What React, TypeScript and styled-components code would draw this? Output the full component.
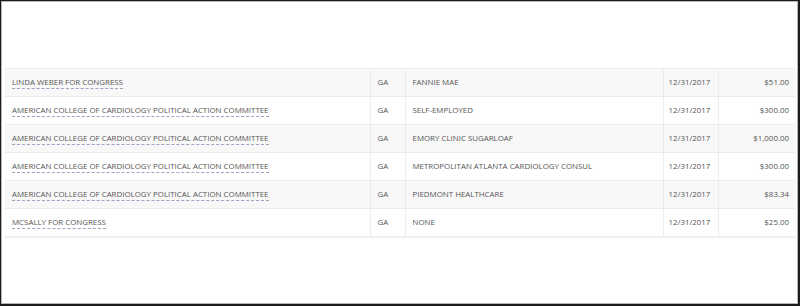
import * as React from "react";
import styled, { createGlobalStyle } from "styled-components";

interface Contribution {
    committee: string;
    state: string;
    employer: string;
    date: string;
    amount: string;
}

const rows: Contribution[] = [
    { committee: "LINDA WEBER FOR CONGRESS", state: "GA", employer: "FANNIE MAE", date: "12/31/2017", amount: "$51.00" },
    { committee: "AMERICAN COLLEGE OF CARDIOLOGY POLITICAL ACTION COMMITTEE", state: "GA", employer: "SELF-EMPLOYED", date: "12/31/2017", amount: "$300.00" },
    { committee: "AMERICAN COLLEGE OF CARDIOLOGY POLITICAL ACTION COMMITTEE", state: "GA", employer: "EMORY CLINIC SUGARLOAF", date: "12/31/2017", amount: "$1,000.00" },
    { committee: "AMERICAN COLLEGE OF CARDIOLOGY POLITICAL ACTION COMMITTEE", state: "GA", employer: "METROPOLITAN ATLANTA CARDIOLOGY CONSUL", date: "12/31/2017", amount: "$300.00" },
    { committee: "AMERICAN COLLEGE OF CARDIOLOGY POLITICAL ACTION COMMITTEE", state: "GA", employer: "PIEDMONT HEALTHCARE", date: "12/31/2017", amount: "$83.34" },
    { committee: "MCSALLY FOR CONGRESS", state: "GA", employer: "NONE", date: "12/31/2017", amount: "$25.00" },
];

const GlobalStyle = createGlobalStyle`
    html, body {
        margin: 0;
        padding: 0;
        background: #fff;
    }
`;

export default function App() {
    return (
        <>
            <GlobalStyle />
            <Frame>
                <Table>
                    <colgroup>
                        <Col $w={365} />
                        <Col $w={35} />
                        <Col $w={258} />
                        <Col $w={55} />
                        <Col $w={77} />
                    </colgroup>
                    <tbody>
                        {rows.map((row, i) => (
                            <Row key={i} $striped={i % 2 === 0}>
                                <Cell>
                                    <CommitteeLink>{row.committee}</CommitteeLink>
                                </Cell>
                                <Cell>{row.state}</Cell>
                                <Cell>{row.employer}</Cell>
                                <DateCell>{row.date}</DateCell>
                                <AmountCell>{row.amount}</AmountCell>
                            </Row>
                        ))}
                    </tbody>
                </Table>
            </Frame>
        </>
    );
}

const Frame = styled.div`
    box-sizing: border-box;
    width: 800px;
    height: 306px;
    border: 1px solid #1c1c1c;
    border-right-width: 2px;
    border-bottom-width: 2px;
    box-shadow: inset 1px 1px 0 #b5b5b5, inset -1px -1px 0 #b5b5b5;
    padding: 67px 0 0 4px;
    font-family: "Open Sans", "Liberation Sans", sans-serif;
`;

const Table = styled.table`
    width: 790px;
    border-collapse: collapse;
    table-layout: fixed;
    box-shadow: 0 1px 1px rgba(0, 0, 0, 0.05);
`;

const Col = styled.col<{ $w: number }>`
    width: ${(p) => p.$w}px;
`;

const Row = styled.tr<{ $striped: boolean }>`
    height: 28px;
    background: ${(p) => (p.$striped ? "#f8f8f8" : "#fff")};
    border-top: 1px solid #ececec;
    border-bottom: 1px solid #ececec;
`;

const Cell = styled.td`
    padding: 0 7px 2px;
    font-size: 7.9px;
    letter-spacing: 0;
    color: #555;
    white-space: nowrap;
    overflow: hidden;
    border-left: 1px solid #ececec;
    vertical-align: middle;

    &:first-child {
        border-left: none;
    }
`;

const DateCell = styled(Cell)`
    padding-left: 5px;
`;

const AmountCell = styled(Cell)`
    text-align: right;
    padding-right: 6px;
`;

const CommitteeLink = styled.a`
    color: #555;
    text-decoration: none;
    border-bottom: 1px dashed #9aa3bf;
    padding-bottom: 1px;
    cursor: pointer;
`;
